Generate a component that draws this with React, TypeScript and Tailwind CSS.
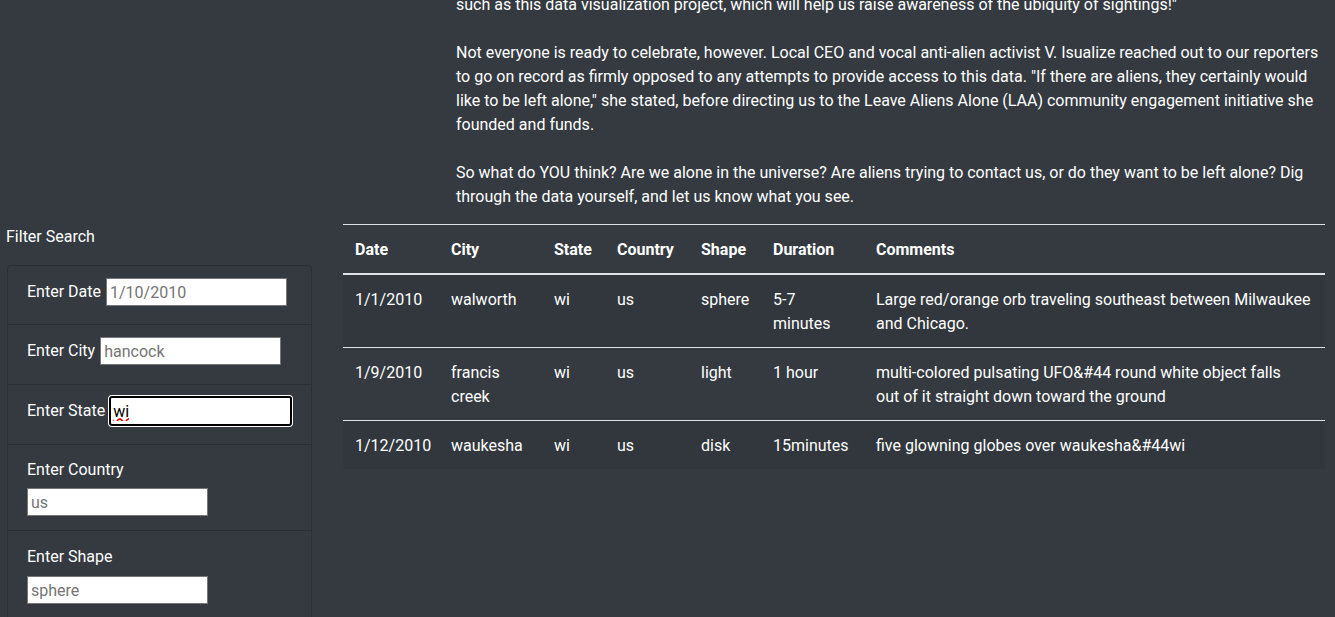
const rows = [
  {
    date: '1/1/2010',
    city: ['walworth'],
    state: 'wi',
    country: 'us',
    shape: 'sphere',
    duration: ['5-7', 'minutes'],
    comments: ['Large red/orange orb traveling southeast between Milwaukee', 'and Chicago.'],
  },
  {
    date: '1/9/2010',
    city: ['francis', 'creek'],
    state: 'wi',
    country: 'us',
    shape: 'light',
    duration: ['1 hour'],
    comments: ['multi-colored pulsating UFO&#44 round white object falls', 'out of it straight down toward the ground'],
  },
  {
    date: '1/12/2010',
    city: ['waukesha'],
    state: 'wi',
    country: 'us',
    shape: 'disk',
    duration: ['15minutes'],
    comments: ['five glowning globes over waukesha&#44wi'],
  },
];

const inputCls =
  'w-[181px] h-[28px] shrink-0 bg-white border border-[#767676] px-[3px] text-[16px] text-black placeholder:text-[#757575] outline-none';

function Lines({ lines }: { lines: string[] }) {
  return (
    <>
      {lines.map((l, i) => (
        <div key={i} className="whitespace-nowrap">
          {l}
        </div>
      ))}
    </>
  );
}

export default function App() {
  return (
    <div
      className="min-h-screen bg-[#343a40] text-white text-[16px] leading-[24px] overflow-hidden"
      style={{ fontFamily: 'Roboto, "Open Sans", sans-serif' }}
    >
      {/* article text */}
      <div className="ml-[456px] -mt-[7px] w-[870px]">
        <div className="whitespace-nowrap">
          such as this data visualization project, which will help us raise awareness of the ubiquity of sightings!"
        </div>
        <div className="h-[24px]" />
        <div className="whitespace-nowrap">
          Not everyone is ready to celebrate, however. Local CEO and vocal anti-alien activist V. Isualize reached out to our reporters
        </div>
        <div className="whitespace-nowrap">
          to go on record as firmly opposed to any attempts to provide access to this data. "If there are aliens, they certainly would
        </div>
        <div className="whitespace-nowrap">
          like to be left alone," she stated, before directing us to the Leave Aliens Alone (LAA) community engagement initiative she
        </div>
        <div className="whitespace-nowrap">founded and funds.</div>
        <div className="h-[24px]" />
        <div className="whitespace-nowrap">
          So what do YOU think? Are we alone in the universe? Are aliens trying to contact us, or do they want to be left alone? Dig
        </div>
        <div className="whitespace-nowrap">through the data yourself, and let us know what you see.</div>
      </div>

      <div className="flex items-start mt-[15px]">
        {/* filters */}
        <div className="w-[343px] shrink-0">
          <h5 className="pl-[6px] pt-px mb-[16px]">Filter Search</h5>
          <ul className="ml-[7px] w-[305px] border border-[#2b3035] rounded-t-[4px] divide-y divide-[#2b3035]">
            <li className="h-[59px] pt-[12px] pl-[19px] pr-5">
              <div className="flex items-center h-[28px] gap-[5px]">
                <label className="whitespace-nowrap shrink-0">Enter Date</label>
                <input className={inputCls} placeholder="1/10/2010" />
              </div>
            </li>
            <li className="h-[60px] pt-[12px] pl-[19px] pr-5">
              <div className="flex items-center h-[28px] gap-[5px]">
                <label className="whitespace-nowrap shrink-0">Enter City</label>
                <input className={inputCls} placeholder="hancock" />
              </div>
            </li>
            <li className="h-[60px] pt-[12px] pl-[19px] pr-5">
              <div className="flex items-center h-[28px] gap-[4px]">
                <label className="whitespace-nowrap shrink-0">Enter State</label>
                <input
                  className="w-[183px] h-[30px] shrink-0 bg-white border-2 border-black rounded-[3px] ring-1 ring-white px-[2px] text-[16px] text-black underline decoration-wavy decoration-[#e00000] outline-none"
                  defaultValue="wi"
                  spellCheck
                />
              </div>
            </li>
            <li className="h-[86px] pt-[13px] pl-[19px] pr-5">
              <label className="block mb-[6px] whitespace-nowrap">Enter Country</label>
              <input className={inputCls} placeholder="us" />
            </li>
            <li className="h-[90px] pt-[14px] pl-[19px] pr-5">
              <label className="block mb-[7px] whitespace-nowrap">Enter Shape</label>
              <input className={inputCls} placeholder="sphere" />
            </li>
          </ul>
        </div>

        {/* table */}
        <table className="w-[982px] table-fixed border-collapse text-left">
          <colgroup>
            <col className="w-[96px]" />
            <col className="w-[103px]" />
            <col className="w-[63px]" />
            <col className="w-[84px]" />
            <col className="w-[72px]" />
            <col className="w-[103px]" />
            <col />
          </colgroup>
          <thead>
            <tr className="border-t border-[#dee2e6] border-b-2">
              {['Date', 'City', 'State', 'Country', 'Shape', 'Duration', 'Comments'].map((h) => (
                <th key={h} className="px-3 pt-[13px] pb-[11px] font-bold">
                  {h}
                </th>
              ))}
            </tr>
          </thead>
          <tbody>
            {rows.map((r, i) => (
              <tr
                key={r.date}
                className={
                  (i % 2 === 0 ? 'bg-[#31373d] ' : '') + (i < rows.length - 1 ? 'border-b border-[#dee2e6]' : '')
                }
              >
                <td className="px-3 pt-[13px] pb-[11px] align-top">{r.date}</td>
                <td className="px-3 pt-[13px] pb-[11px] align-top">
                  <Lines lines={r.city} />
                </td>
                <td className="px-3 pt-[13px] pb-[11px] align-top">{r.state}</td>
                <td className="px-3 pt-[13px] pb-[11px] align-top">{r.country}</td>
                <td className="px-3 pt-[13px] pb-[11px] align-top">{r.shape}</td>
                <td className="px-3 pt-[13px] pb-[11px] align-top">
                  <Lines lines={r.duration} />
                </td>
                <td className="px-3 pt-[13px] pb-[11px] align-top">
                  <Lines lines={r.comments} />
                </td>
              </tr>
            ))}
          </tbody>
        </table>
      </div>
    </div>
  );
}
